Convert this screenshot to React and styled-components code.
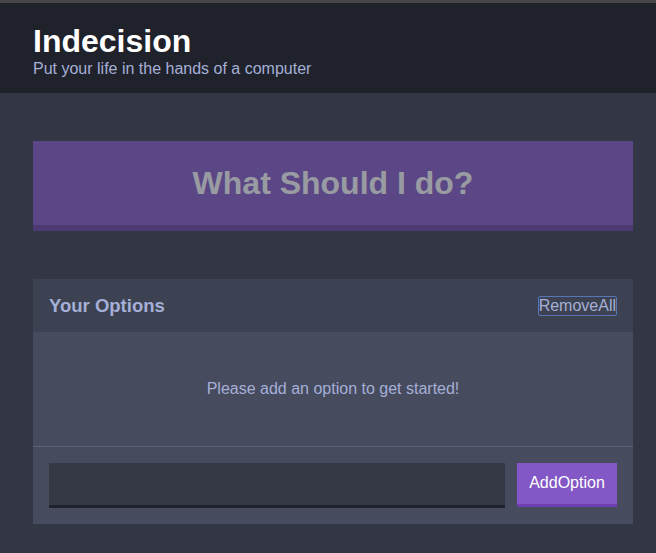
import React, { useState } from "react";
import styled, { createGlobalStyle } from "styled-components";

const GlobalStyle = createGlobalStyle`
  html, body { margin: 0; padding: 0; }
  body {
    background: #333745;
    font-family: "Liberation Sans", Arial, Helvetica, sans-serif;
    color: #ffffff;
  }
  * { box-sizing: border-box; }
`;

const TopStrip = styled.div`
  height: 3px;
  background: #474747;
`;

const Header = styled.header`
  background: #20222b;
  padding: 20px 0 15px;
  margin-bottom: 48px;
`;

const Container = styled.div`
  width: 600px;
  margin: 0 23px 0 33px;
`;

const Title = styled.h1`
  margin: 0;
  font-size: 32px;
  line-height: normal;
  font-weight: bold;
  color: #ffffff;
`;

const Subtitle = styled.h2`
  margin: 0;
  font-size: 16px;
  line-height: normal;
  font-weight: 500;
  color: #a5afd7;
`;

const BigButton = styled.button`
  display: block;
  width: 100%;
  margin: 0 0 48px;
  padding: 24px 24px 23px;
  background: #8357c5;
  border: none;
  border-bottom: 6px solid #673da3;
  color: #ffffff;
  font-family: inherit;
  font-weight: bold;
  font-size: 32px;
  line-height: normal;
  &:disabled { opacity: 0.5; }
`;

const Widget = styled.section`
  background: #464b5e;
  margin-bottom: 48px;
`;

const WidgetHeader = styled.div`
  background: #3c4251;
  display: flex;
  justify-content: space-between;
  align-items: center;
  padding: 16px;
  height: 53px;
`;

const WidgetTitle = styled.h3`
  margin: 0;
  font-size: 18.5px;
  font-weight: bold;
  color: #a5afd7;
`;

const LinkButton = styled.button`
  background: none;
  border: 1px solid #5676b8;
  border-radius: 2px;
  padding: 0;
  color: #a5afd7;
  font-family: inherit;
  font-size: 16px;
  line-height: 18px;
`;

const Message = styled.p`
  margin: 0;
  padding: 48px 0;
  text-align: center;
  color: #a5afd7;
  font-size: 16px;
  line-height: normal;
  border-bottom: 1px solid #596079;
`;

const OptionForm = styled.form`
  display: flex;
  padding: 16px;
  gap: 12px;
`;

const OptionInput = styled.input`
  flex: 1;
  height: 45px;
  background: #353845;
  border: none;
  border-bottom: 3px solid #20222b;
  color: #a5afd7;
  font-family: inherit;
  font-size: 16px;
  padding: 12px;
  outline: none;
`;

const AddButton = styled.button`
  width: 100px;
  height: 44px;
  background: #8357c5;
  border: none;
  border-bottom: 3px solid #6f3fb0;
  color: #ffffff;
  font-family: inherit;
  font-size: 16px;
  padding: 0 12px 1px;
`;

export default function App() {
  const [options] = useState([]);
  return (
    <>
      <GlobalStyle />
      <TopStrip />
      <Header>
        <Container>
          <Title>Indecision</Title>
          <Subtitle>Put your life in the hands of a computer</Subtitle>
        </Container>
      </Header>
      <Container>
        <BigButton disabled={options.length === 0}>What Should I do?</BigButton>
        <Widget>
          <WidgetHeader>
            <WidgetTitle>Your Options</WidgetTitle>
            <LinkButton>RemoveAll</LinkButton>
          </WidgetHeader>
          <Message>Please add an option to get started!</Message>
          <OptionForm onSubmit={(e) => e.preventDefault()}>
            <OptionInput type="text" name="option" />
            <AddButton>AddOption</AddButton>
          </OptionForm>
        </Widget>
      </Container>
    </>
  );
}
